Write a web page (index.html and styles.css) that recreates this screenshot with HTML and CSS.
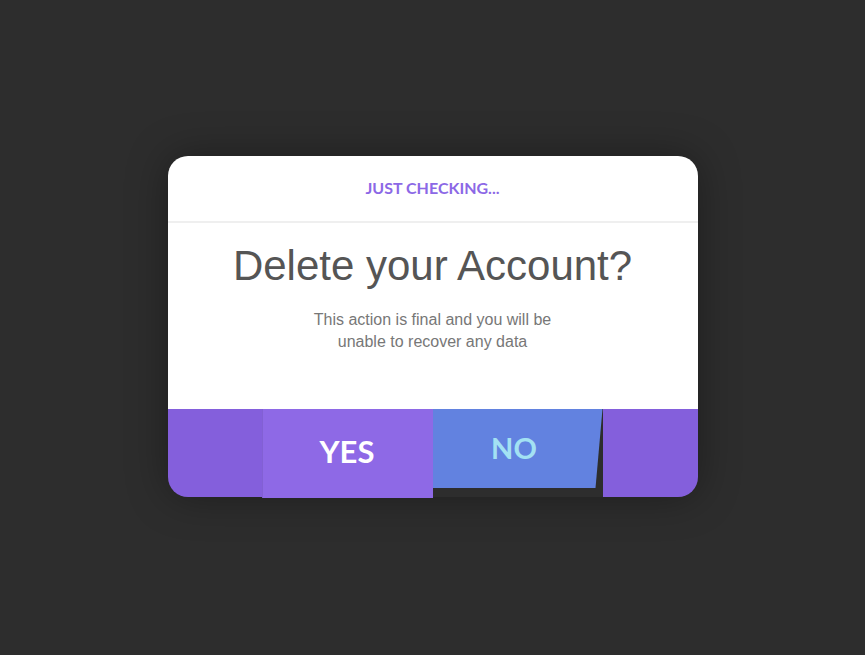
FILE: index.html
```
<!DOCTYPE html>
<html lang="en">
<head>
<meta charset="utf-8">
<title>Delete your Account?</title>
<link rel="stylesheet" href="styles.css">
</head>
<body>
<div class="stage">
  <div class="dialog">
    <div class="dialog-header">JUST CHECKING...</div>
    <div class="dialog-body">
      <h1 class="dialog-title">Delete your Account?</h1>
      <p class="dialog-text">This action is final and you will be<br>unable to recover any data</p>
    </div>
    <div class="dialog-footer">
      <div class="side side-left"></div>
      <button class="btn btn-yes">YES</button>
      <button class="btn btn-no">NO</button>
      <div class="side side-right"></div>
    </div>
  </div>
</div>
</body>
</html>
```
FILE: styles.css
```
html, body {
  margin: 0;
  padding: 0;
  height: 100%;
}
body {
  background: #2d2d2d;
  font-family: "Liberation Sans", Arial, sans-serif;
}
.stage {
  height: 100%;
  display: flex;
  align-items: center;
  justify-content: center;
}
.dialog {
  width: 530px;
  height: 341px;
  margin-top: -2px;
  display: flex;
  flex-direction: column;
  border-radius: 20px;
  box-shadow: 0 0 40px rgba(0, 0, 0, 0.35);
}
.dialog-header {
  height: 67px;
  display: flex;
  align-items: center;
  justify-content: center;
  background: #fff;
  border-radius: 20px 20px 0 0;
  border-bottom: 2px solid #efefef;
  font-family: Lato, "Open Sans", sans-serif;
  font-weight: 700;
  font-size: 16px;
  color: #8c68e6;
  padding-bottom: 2px;
  box-sizing: border-box;
}
.dialog-body {
  height: 186px;
  background: #fff;
  text-align: center;
  padding-top: 19px;
  box-sizing: border-box;
}
.dialog-title {
  margin: 0;
  font-weight: 400;
  font-size: 42px;
  line-height: 48px;
  color: #555;
}
.dialog-text {
  margin: 19px 0 0;
  font-size: 16px;
  line-height: 22px;
  color: #777;
}
.dialog-footer {
  height: 88px;
  display: grid;
  grid-template-columns: 94px 171px 170px 1fr;
  align-items: start;
}
.side {
  height: 88px;
  background: #845fdc;
}
.side-left {
  border-bottom-left-radius: 20px;
}
.side-right {
  border-bottom-right-radius: 20px;
}
.btn {
  border: 0;
  margin: 0;
  padding: 0;
  font-family: Lato, "Open Sans", sans-serif;
  font-weight: 700;
  cursor: pointer;
}
.btn-yes {
  height: 89px;
  background: #8e69e6;
  color: #fff;
  font-size: 31px;
  padding-bottom: 6px;
  box-shadow: inset 1px 0 0 rgba(0, 0, 0, 0.08);
}
.btn-no {
  height: 79px;
  background: #6282e0;
  color: #a3e1f3;
  font-size: 29px;
  padding-right: 7px;
  padding-bottom: 2px;
  clip-path: polygon(0 0, 100% 0, calc(100% - 7px) 100%, 0 100%);
}
```
